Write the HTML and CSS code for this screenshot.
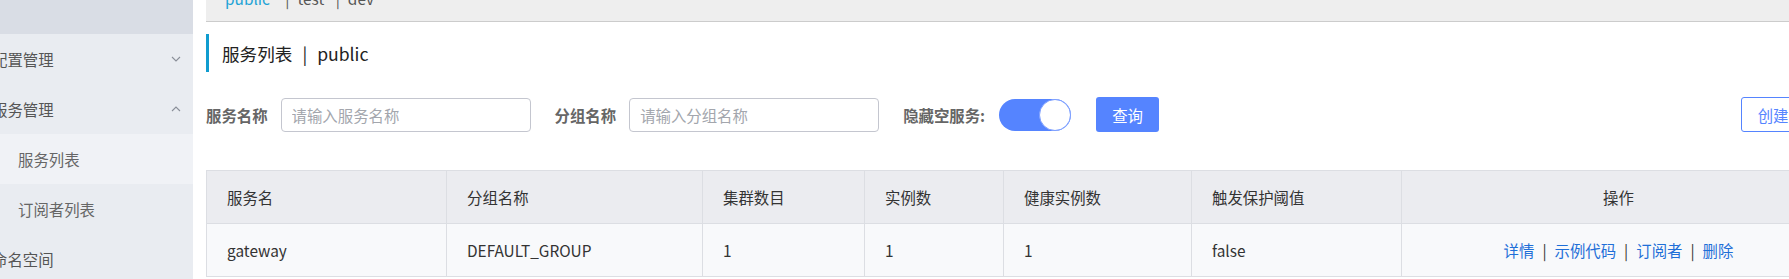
FILE: index.html
```html
<!doctype html>
<html lang="zh-CN">
<head>
    <meta charset="UTF-8">
    <title>服务列表</title>
    <link rel="stylesheet" href="styles.css">
</head>
<body>

<div class="sidebar">
    <div class="side-top"></div>
    <div class="menu-item">
        <span class="menu-text">配置管理</span>
        <svg class="chevron" width="10" height="6" viewBox="0 0 10 6"><polyline points="1,1 5,5 9,1"/></svg>
    </div>
    <div class="menu-item">
        <span class="menu-text">服务管理</span>
        <svg class="chevron" width="10" height="6" viewBox="0 0 10 6"><polyline points="1,5 5,1 9,5"/></svg>
    </div>
    <div class="menu-item sub active"><span class="menu-text">服务列表</span></div>
    <div class="menu-item sub"><span class="menu-text">订阅者列表</span></div>
    <div class="menu-item"><span class="menu-text">命名空间</span></div>
</div>

<div class="main">
    <div class="tabbar">
        <div class="tabs">
            <span class="tab active">public</span>
            <span class="tab"><i class="sep">|</i>test</span>
            <span class="tab"><i class="sep">|</i>dev</span>
        </div>
    </div>

    <div class="page-title">服务列表<span class="title-sep">|</span>public</div>

    <div class="search">
        <label class="field-label">服务名称</label>
        <input class="field-input" type="text" placeholder="请输入服务名称">
        <label class="field-label">分组名称</label>
        <input class="field-input" type="text" placeholder="请输入分组名称">
        <label class="field-label short">隐藏空服务:</label>
        <div class="switch"><span class="knob"></span></div>
        <button class="btn-primary">查询</button>
        <button class="btn-outline">创建服务</button>
    </div>

    <table class="service-table">
        <colgroup>
            <col style="width: 240px">
            <col style="width: 256px">
            <col style="width: 162px">
            <col style="width: 139px">
            <col style="width: 188px">
            <col style="width: 210px">
            <col>
        </colgroup>
        <thead>
        <tr>
            <th>服务名</th>
            <th>分组名称</th>
            <th>集群数目</th>
            <th>实例数</th>
            <th>健康实例数</th>
            <th>触发保护阈值</th>
            <th class="center">操作</th>
        </tr>
        </thead>
        <tbody>
        <tr>
            <td>gateway</td>
            <td>DEFAULT_GROUP</td>
            <td>1</td>
            <td>1</td>
            <td>1</td>
            <td>false</td>
            <td class="center">
                <a href="#">详情</a><span class="bar">|</span><a href="#">示例代码</a><span class="bar">|</span><a href="#">订阅者</a><span class="bar">|</span><a href="#">删除</a>
            </td>
        </tr>
        </tbody>
    </table>
</div>

</body>
</html>
```

FILE: styles.css
```css
body {
    margin: 0;
    display: flex;
    overflow: hidden;
    font-family: "Noto Sans CJK SC", "Noto Sans", sans-serif;
    font-size: 15.4px;
    color: #333;
    background: #fff;
}

/* sidebar */
.sidebar {
    flex: none;
    width: 193px;
    height: 279px;
    background: #e9ecf1;
    overflow: hidden;
}

.side-top {
    height: 34px;
    background: #d9dde5;
}

.menu-item {
    height: 50px;
    display: flex;
    align-items: center;
    justify-content: space-between;
    padding-right: 12px;
    color: #555;
}

.menu-text {
    margin-left: -8px;
}

.menu-item.sub {
    color: #666;
}

.menu-item.sub .menu-text {
    margin-left: 18px;
}

.menu-item.active {
    background: #f0f2f6;
}

.chevron polyline {
    fill: none;
    stroke: #8a8f99;
    stroke-width: 1.1;
}

/* main area */
.main {
    flex: none;
    width: 1630px;
    padding: 0 13px;
}

.tabbar {
    height: 21px;
    background: #eeeeee;
    border-bottom: 1px solid #cccccc;
    overflow: hidden;
}

.tabs {
    margin-top: -12px;
    padding-left: 19px;
    line-height: 20px;
    color: #555;
}

.tab {
    margin-right: 8px;
}

.tab.active {
    color: #1ea3d6;
    margin-right: 12px;
}

.sep {
    font-style: normal;
    margin-right: 8px;
}

.page-title {
    margin-top: 12px;
    height: 38px;
    border-left: 3px solid #109ccf;
    padding-left: 13px;
    display: flex;
    align-items: center;
    font-size: 17.6px;
    color: #222;
}

.title-sep {
    margin: 0 10px;
}

.search {
    margin-top: 25px;
    display: flex;
    align-items: center;
}

.field-label {
    font-weight: bold;
    color: #666;
    margin-right: 13px;
}

.field-label.short {
    margin-right: 14px;
}

.field-input {
    box-sizing: border-box;
    width: 250px;
    height: 34px;
    margin-right: 24px;
    padding: 0 10px;
    border: 1px solid #c4c6cf;
    border-radius: 4px;
    font-family: inherit;
    font-size: 15.4px;
    color: #333;
}

.field-input::placeholder {
    color: #a3a6ad;
}

.switch {
    box-sizing: border-box;
    width: 72px;
    height: 32px;
    border-radius: 16px;
    background: #5584ff;
    display: flex;
    justify-content: flex-end;
    margin-right: 25px;
}

.knob {
    box-sizing: border-box;
    width: 32px;
    height: 32px;
    border-radius: 50%;
    background: #fff;
    border: 1px solid #7d9fff;
}

.btn-primary {
    width: 63px;
    height: 35px;
    border: none;
    border-radius: 3px;
    background: #5584ff;
    color: #fff;
    font-family: inherit;
    font-size: 15.4px;
    cursor: pointer;
}

.btn-outline {
    margin-left: auto;
    width: 95px;
    height: 35px;
    border: 1px solid #5584ff;
    border-radius: 3px;
    background: #fff;
    color: #5584ff;
    font-family: inherit;
    font-size: 15.4px;
    cursor: pointer;
}

/* table */
.service-table {
    margin-top: 38px;
    width: 100%;
    table-layout: fixed;
    border-collapse: collapse;
    border: 1px solid #dcdee3;
}

.service-table th,
.service-table td {
    height: 52px;
    padding: 0 0 0 20px;
    border: 1px solid #dcdee3;
    text-align: left;
    font-weight: normal;
    color: #333;
}

.service-table th {
    background: #ebecf0;
}

.service-table td {
    background: #f8f9fb;
}

.service-table .center {
    text-align: center;
    padding: 0;
}

.service-table a {
    color: #1f6fd8;
    text-decoration: none;
}

.bar {
    margin: 0 8px;
    color: #333;
}
```
